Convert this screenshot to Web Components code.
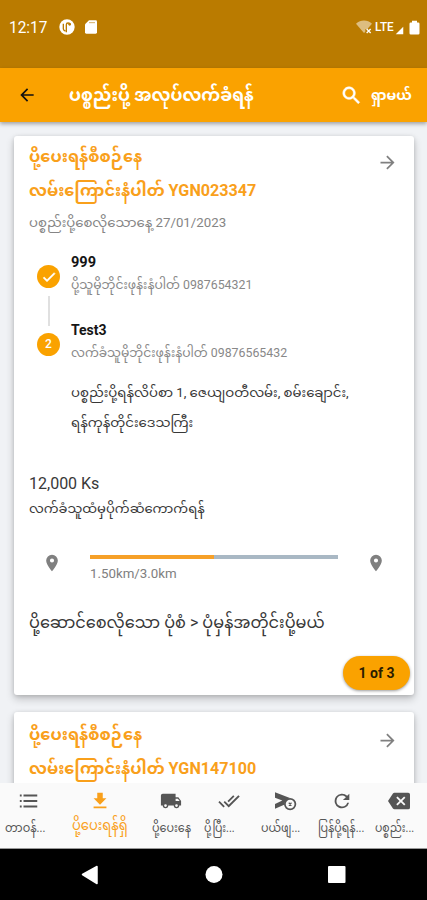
<!DOCTYPE html>
<html lang="my">
<head>
<meta charset="utf-8">
<title>Delivery jobs</title>
<style>
body{margin:0;width:427px;height:900px;overflow:hidden;background:#f0f2f5;font-family:Roboto,"Noto Sans Myanmar","Noto Sans",sans-serif}
</style>
</head>
<body>
<delivery-app></delivery-app>
<script>
const ICONS = {
  back:'<path d="M20 11H7.8l5.6-5.6L12 4l-8 8 8 8 1.4-1.4L7.8 13H20z"/>',
  forward:'<path d="M12 4l-1.4 1.4 5.6 5.6H4v2h12.2l-5.6 5.6L12 20l8-8z"/>',
  search:'<path d="M15.5 14h-.8l-.3-.3A6.5 6.5 0 1 0 13.7 14.4l.3.3v.8l5 5 1.5-1.5zm-6 0a4.5 4.5 0 1 1 0-9 4.5 4.5 0 0 1 0 9z" stroke="currentColor" stroke-width=".6"/>',
  pin:'<path d="M12 2a7 7 0 0 0-7 7c0 5.2 7 13 7 13s7-7.8 7-13a7 7 0 0 0-7-7zm0 9.5a2.5 2.5 0 1 1 0-5 2.5 2.5 0 0 1 0 5z"/>',
  check:'<path d="M9 16.2L4.8 12l-1.4 1.4L9 19 21 7l-1.4-1.4z" stroke="currentColor"/>',
  list:'<path d="M2 5h2v2H2zm0 6h2v2H2zm0 6h2v2H2zM6 5h15v2H6zm0 6h15v2H6zm0 6h15v2H6z"/>',
  download:'<path d="M19 9h-4V3H9v6H5l7 7zM5 18v2h14v-2z"/>',
  truck:'<path d="M20 8h-3V4H3a2 2 0 0 0-2 2v11h2a3 3 0 0 0 6 0h6a3 3 0 0 0 6 0h2v-5zM6 18.5a1.5 1.5 0 1 1 0-3 1.5 1.5 0 0 1 0 3zm13.5-9 2 2.5H17V9.500zm-1.500 9a1.500 1.500 0 1 1 0-3 1.500 1.500 0 0 1 0 3z"/>',
  done:'<path d="M18 7l-1.4-1.400-6.300 6.300 1.400 1.400zm4.200-1.400L11.700 16.200l-4.200-4.200-1.400 1.400L11.700 19l12-12zM.4 13.400L6 19l1.400-1.400L1.800 12z"/>',
  cancelsend:'<path d="M0 2.500L17 9c-3.500.5-6.500 3.300-7 7L0 20.500v-5.200L8 11.500 0 8.500z"/><path d="M16.500 8.700a6.700 6.700 0 1 0 0 13.400 6.700 6.700 0 0 0 0-13.400zm0 1.900a4.800 4.800 0 1 1 0 9.600 4.800 4.800 0 0 1 0-9.600z"/><path d="M15 13.900l3 3m0-3l-3 3" stroke="currentColor" stroke-width="1.200"/>',
  refresh:'<path d="M17.650 6.350A8 8 0 1 0 19.730 14h-2.080A6 6 0 1 1 12 6c1.660 0 3.140.690 4.220 1.780L13 11h7V4z"/>',
  backspace:'<path d="M22 3H7c-.7 0-1.200.350-1.600.880L0 12l5.400 8.110c.4.530.9.890 1.600.890h15a2 2 0 0 0 2-2V5a2 2 0 0 0-2-2zm-3 12.590L17.590 17 14 13.410 10.410 17 9 15.590 12.590 12 9 8.410 10.410 7 14 10.590 17.590 7 19 8.410 15.410 12z"/>',
  wifi:'<path opacity=".5" d="M0 7C7 .8 17 .8 24 7l-7 8h-3v4l-2 2z"/><path d="M16 15l6 6m0-6l-6 6" stroke="currentColor" stroke-width="2"/>',
  signal:'<path d="M2 22h20V2z"/>',
  battery:'<path d="M8 1h8v3h2q2 0 2 2v15q0 2-2 2H6q-2 0-2-2V6q0-2 2-2h2z"/>',
  sd:'<path d="M9 2h10a2 2 0 0 1 2 2v16a2 2 0 0 1-2 2H5a2 2 0 0 1-2-2V8z"/><path d="M9 5.500h9" stroke="#ba7b00" stroke-opacity=".6" stroke-width="1.500"/>',
  app:'<circle cx="12" cy="12" r="11.500"/><path d="M11 20V8.500q0-2.500 2.500-2.500 3 0 3 2.500M6.500 7v8q0 2 3 3" fill="none" stroke="#ba7b00" stroke-width="2"/><circle cx="16" cy="8" r="2" fill="#ba7b00"/>'
};
class UiIcon extends HTMLElement{
  connectedCallback(){
    const s=this.getAttribute('size')||24;
    this.attachShadow({mode:'open'}).innerHTML=`<style>:host{display:block;flex:none;width:${s}px;height:${s}px}svg{display:block;fill:currentColor}</style><svg width="${s}" height="${s}" viewBox="0 0 24 24">${ICONS[this.getAttribute('name')]}</svg>`;
  }
}
customElements.define('ui-icon',UiIcon);

/* One line of text: size, line box height, and an advance width that the glyphs are spread over. */
class TextLine extends HTMLElement{
  connectedCallback(){
    const a=n=>this.getAttribute(n);
    const w=+a('w');
    this.attachShadow({mode:'open'}).innerHTML=`<style>:host{display:block;flex:none;width:${w}px;height:${a('h')}px;line-height:${a('h')}px;font-size:${a('size')}px;white-space:nowrap}span{display:inline-block;transform-origin:0 50%;line-height:inherit}</style><span><slot></slot></span>`;
    const s=this.shadowRoot.querySelector('span');
    const real=s.offsetWidth;
    if(real) s.style.transform=`scaleX(${w/real})`;
  }
}
customElements.define('text-line',TextLine);

class StatusBar extends HTMLElement{
  connectedCallback(){
    this.attachShadow({mode:'open'}).innerHTML=`<style>:host{display:flex;align-items:center;height:68px;box-sizing:border-box;padding:0 5px 14px 9px;background:#ba7b00;color:#fff}
    .r{margin-left:auto;display:flex;align-items:center;font-weight:500}</style>
    <text-line w="38" h="20" size="17">12:17</text-line>
    <ui-icon name="app" size="16" style="margin-left:12px"></ui-icon>
    <ui-icon name="sd" size="16" style="margin-left:8px"></ui-icon>
    <div class="r"><ui-icon name="wifi" size="16"></ui-icon><text-line style="margin-left:3px" w="19" h="20" size="13">LTE</text-line><ui-icon name="signal" size="9" style="margin:6px 3px 0 1px"></ui-icon><ui-icon name="battery" size="15"></ui-icon></div>`;
  }
}
customElements.define('status-bar',StatusBar);

class AppBar extends HTMLElement{
  connectedCallback(){
    this.attachShadow({mode:'open'}).innerHTML=`<style>:host{display:flex;align-items:center;height:54px;box-sizing:border-box;padding:0 15px 0 17px;background:#faa200;color:#fff;font-weight:700;box-shadow:0 2px 4px #0005;position:relative}
    .back{color:#111}.s{margin-left:auto;display:flex;align-items:center;gap:8px}</style>
    <ui-icon class="back" name="back" size="20"></ui-icon>
    <text-line style="margin-left:32px" w="185" h="54" size="17">ပစ္စည်းပို့ အလုပ်လက်ခံရန်</text-line>
    <div class="s"><ui-icon name="search" size="23"></ui-icon><text-line w="41" h="52" size="14">ရှာမယ်</text-line></div>`;
  }
}
customElements.define('app-bar',AppBar);

class JobCard extends HTMLElement{
  connectedCallback(){
    this.attachShadow({mode:'open'}).innerHTML=`<style>
    :host{display:block;box-sizing:border-box;width:400px;background:#fff;border-radius:3px;box-shadow:0 4px 8px #0003,0 1px 4px #0002;padding:3px 15px 0}
    header{display:flex;justify-content:space-between;height:68px;color:#f9a01b;font-weight:700}
    header ui-icon{color:#808080;margin-top:13px;margin-right:1px}
    </style><header><div><text-line w="113" h="35" size="16">ပို့ပေးရန်စီစဉ်နေ</text-line><text-line w="227" h="34" size="16">လမ်းကြောင်းနံပါတ် ${this.getAttribute('code')}</text-line></div><ui-icon name="forward" size="21"></ui-icon></header><slot></slot>`;
  }
}
customElements.define('job-card',JobCard);

class JobStep extends HTMLElement{
  connectedCallback(){
    this.attachShadow({mode:'open'}).innerHTML=`<style>
    :host{display:flex;gap:11px;height:68px}
    .m{width:23px;margin:15px 0 0 8px;display:flex;flex:none;flex-direction:column;align-items:center}
    .d{width:23px;height:23px;flex:none;border-radius:50%;background:#faa200;color:#fff;display:flex;align-items:center;justify-content:center;font-weight:500}
    .l{width:2px;height:30px;flex:none;margin-top:8px;background:#e0e0e0}
    .n{color:#151515;font-weight:700}.p{color:#888}
    </style><div class="m"><div class="d"><slot name="mark"></slot></div>${this.hasAttribute('linked')?'<div class="l"></div>':''}</div>
    <div><div class="n"><slot name="name"></slot></div><div class="p"><slot name="phone"></slot></div></div>`;
  }
}
customElements.define('job-step',JobStep);

class RouteProgress extends HTMLElement{
  connectedCallback(){
    this.attachShadow({mode:'open'}).innerHTML=`<style>
    :host{display:flex;color:#808080;padding:0 13px 0 13px;justify-content:space-between}
    .b{width:248px}.t{height:4px;margin-top:2px;background:linear-gradient(90deg,#f6a028 50%,#a9b8c4 50%)}
    </style><ui-icon name="pin" size="20"></ui-icon><div class="b"><div class="t"></div><text-line style="margin-top:5px" w="87" h="20" size="13">1.50km/3.0km</text-line></div><ui-icon name="pin" size="20"></ui-icon>`;
  }
}
customElements.define('route-progress',RouteProgress);

/* The label may sit off the icon's centre, by the shift attribute. */
class TabItem extends HTMLElement{
  connectedCallback(){
    this.attachShadow({mode:'open'}).innerHTML=`<style>:host{display:flex;flex-direction:column;align-items:center;flex:none;color:#555}:host([active]){color:#f9a01b}.t{transform:translateX(${this.getAttribute('shift')||0}px)}</style><ui-icon name="${this.getAttribute('icon')}" size="22"></ui-icon><div class="t"><slot></slot></div>`;
  }
}
customElements.define('tab-item',TabItem);

class BottomTabs extends HTMLElement{
  connectedCallback(){
    this.attachShadow({mode:'open'}).innerHTML=`<style>
    :host{display:grid;grid-template-columns:57px 86px 56px 59px 55px 57px 57px;height:66px;box-sizing:border-box;padding-top:7px;background:#fafafa;border-bottom:1px solid #999}</style>
    <tab-item icon="list" shift="-4"><text-line w="40" h="32" size="12">တာဝန်...</text-line></tab-item>
    <tab-item icon="download" active><text-line w="56" h="27" size="14">ပို့ပေးရန်ရှိ</text-line></tab-item>
    <tab-item icon="truck"><text-line w="39" h="32" size="12">ပို့ပေးနေ</text-line></tab-item>
    <tab-item icon="done" shift="-9"><text-line w="31" h="32" size="12">ပို့ပြီး...</text-line></tab-item>
    <tab-item icon="cancelsend" shift="-5"><text-line w="39" h="32" size="12">ပယ်ဖျ...</text-line></tab-item>
    <tab-item icon="refresh" shift="-1"><text-line w="46" h="32" size="12">ပြန်ပို့ရန်...</text-line></tab-item>
    <tab-item icon="backspace" shift="-4"><text-line w="39" h="32" size="12">ပစ္စည်း...</text-line></tab-item>`;
  }
}
customElements.define('bottom-tabs',BottomTabs);

class SystemNav extends HTMLElement{
  connectedCallback(){
    this.attachShadow({mode:'open'}).innerHTML=`<style>:host{display:block;height:51px;background:#000}svg{display:block;fill:#fff}</style>
    <svg width="427" height="51"><path d="M82.500 25.500L97 17.500v17z" stroke="#fff" stroke-width="1.500" stroke-linejoin="round"/><circle cx="214" cy="25.500" r="8.500"/><rect x="328" y="17" width="17.500" height="17" rx="1"/></svg>`;
  }
}
customElements.define('system-nav',SystemNav);

class DeliveryApp extends HTMLElement{
  connectedCallback(){
    this.attachShadow({mode:'open'}).innerHTML=`<style>
    :host{display:flex;flex-direction:column;height:900px}
    main{flex:1;min-height:0;overflow:hidden;padding:14px 13px 0 14px;display:flex;flex-direction:column;gap:17px}
    job-card{flex:none}.first{height:559px}.second{height:120px;padding-top:5px}
    .g{color:#858585}.k{color:#383838}
    .addr{margin:-8px 0 0 42px}.cost{margin:32px 0 0}
    .pill{display:flex;justify-content:center;width:67px;height:34px;border-radius:17px;background:#faa200;box-shadow:0 1px 3px #0006;color:#2a1c00;font-weight:700;margin:16px -11px 0 auto}
    </style>
    <status-bar></status-bar><app-bar></app-bar>
    <main>
      <job-card class="first" code="YGN023347">
        <text-line class="g" w="197" h="32" size="13">ပစ္စည်းပို့စေလိုသောနေ့ 27/01/2023</text-line>
        <div style="height:11px"></div>
        <job-step linked><ui-icon slot="mark" name="check" size="16"></ui-icon><text-line slot="name" w="25" h="24" size="14">999</text-line><text-line slot="phone" w="181" h="22" size="12">ပို့သူမိုဘိုင်းဖုန်းနံပါတ် 0987654321</text-line></job-step>
        <job-step><text-line slot="mark" w="7" h="23" size="12">2</text-line><text-line slot="name" w="36" h="24" size="14">Test3</text-line><text-line slot="phone" w="216" h="22" size="12">လက်ခံသူမိုဘိုင်းဖုန်းနံပါတ် 09876565432</text-line></job-step>
        <div class="addr k"><text-line w="278" h="30" size="13">ပစ္စည်းပို့ရန်လိပ်စာ 1, ဇေယျဝတီလမ်း, စမ်းချောင်း,</text-line><text-line w="122" h="29" size="13">ရန်ကုန်တိုင်းဒေသကြီး</text-line></div>
        <div class="cost k"><text-line w="70" h="30" size="16">12,000 Ks</text-line><text-line w="176" h="19" size="13">လက်ခံသူထံမှပိုက်ဆံကောက်ရန်</text-line></div>
        <route-progress style="margin-top:35px"></route-progress>
        <text-line class="k" style="margin-top:22px" w="296" h="34" size="16">ပို့ဆောင်စေလိုသော ပုံစံ &gt; ပုံမှန်အတိုင်းပို့မယ်</text-line>
        <div class="pill"><text-line w="36" h="34" size="14">1 of 3</text-line></div>
      </job-card>
      <job-card class="second" code="YGN147100"></job-card>
    </main>
    <bottom-tabs></bottom-tabs><system-nav></system-nav>`;
  }
}
customElements.define('delivery-app',DeliveryApp);
</script>
</body>
</html>
